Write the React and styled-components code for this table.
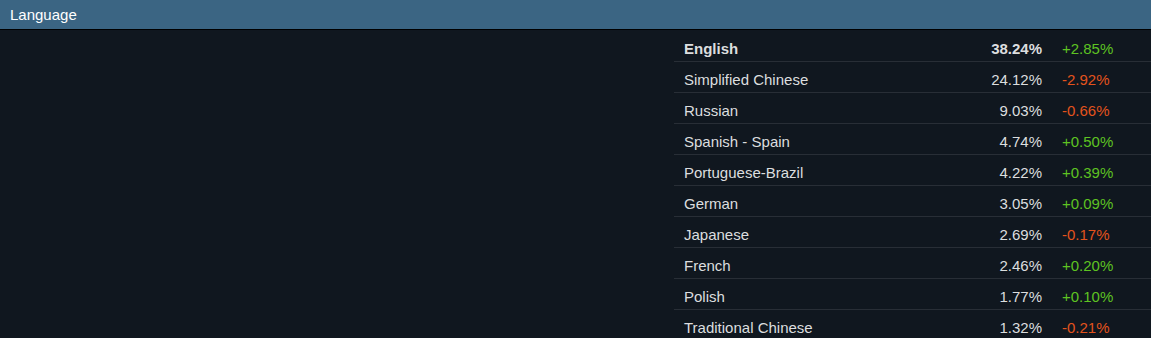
import styled, { createGlobalStyle } from "styled-components";

const GlobalStyle = createGlobalStyle`
  body {
    margin: 0;
    background: #10171f;
    font-family: "Liberation Sans", Arial, sans-serif;
  }
`;

const Page = styled.div`
  width: 1151px;
  height: 338px;
  overflow: hidden;
  background: #10171f;
`;

const Heading = styled.div`
  height: 29px;
  line-height: 29px;
  padding: 0 10px;
  background: #3b6583;
  border-bottom: 1px solid #000;
  color: #fff;
  font-size: 15px;
`;

const Body = styled.div`
  display: grid;
  grid-template-columns: 674px 1fr;
`;

const Table = styled.div`
  grid-column: 2;
  margin-top: 1px;
`;

const Row = styled.div`
  display: grid;
  grid-template-columns: 1fr 80px 89px;
  column-gap: 20px;
  align-items: center;
  height: 30px;
  box-sizing: border-box;
  height: 31px;
  padding: 4px 0 0 10px;
  border-bottom: 1px solid #282e36;
  font-size: 15px;
  color: #dcdedf;
  font-weight: ${(props) => (props.$bold ? 700 : 400)};
`;

const Pct = styled.div`
  text-align: right;
`;

const Change = styled.div`
  font-weight: 400;
  color: ${(props) => (props.$up ? "#5ec322" : "#e3531d")};
`;

const languages = [
  ["English", "38.24%", "+2.85%"],
  ["Simplified Chinese", "24.12%", "-2.92%"],
  ["Russian", "9.03%", "-0.66%"],
  ["Spanish - Spain", "4.74%", "+0.50%"],
  ["Portuguese-Brazil", "4.22%", "+0.39%"],
  ["German", "3.05%", "+0.09%"],
  ["Japanese", "2.69%", "-0.17%"],
  ["French", "2.46%", "+0.20%"],
  ["Polish", "1.77%", "+0.10%"],
  ["Traditional Chinese", "1.32%", "-0.21%"],
];

export default function App() {
  return (
    <Page>
      <GlobalStyle />
      <Heading>Language</Heading>
      <Body>
        <Table>
          {languages.map(([name, pct, change], i) => (
            <Row key={name} $bold={i === 0}>
              <div>{name}</div>
              <Pct>{pct}</Pct>
              <Change $up={change.startsWith("+")}>{change}</Change>
            </Row>
          ))}
        </Table>
      </Body>
    </Page>
  );
}
